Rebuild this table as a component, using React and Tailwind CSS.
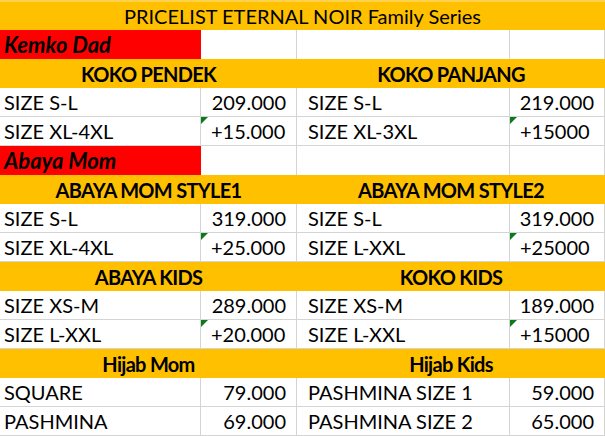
const font = { fontFamily: 'Lato, "Liberation Sans", sans-serif' };

const Flag = () => (
  <svg className="absolute left-0 top-0" width="7" height="7" viewBox="0 0 7 7">
    <polygon points="0,0 7,0 0,7" fill="#0b7a1f" />
  </svg>
);

const Label = ({ children, first }) => (
  <div className={`h-[29px] border-r border-b border-[#d4d4d4] bg-white flex items-center whitespace-nowrap ${first ? 'pl-[4px]' : 'pl-[11px]'}`}>
    {children}
  </div>
);

const Value = ({ children, flag }) => (
  <div className={`relative h-[29px] border-r border-b border-[#d4d4d4] bg-white flex items-center whitespace-nowrap ${flag ? 'justify-start pl-[10px]' : 'justify-end pr-[10px]'}`}>
    {flag && <Flag />}
    {children}
  </div>
);

const Header = ({ children }) => (
  <div className="col-span-2 h-[29px] bg-[#ffc000] flex items-center justify-center font-bold tracking-[-0.7px] whitespace-nowrap">
    {children}
  </div>
);

const Group = ({ name }) => (
  <>
    <div className="h-[29px] bg-[#ff0000] flex items-center pl-[4px] font-bold italic text-[22px]">{name}</div>
    <div className="h-[29px] border-r border-[#d4d4d4] bg-white" />
    <div className="h-[29px] border-r border-[#d4d4d4] bg-white" />
    <div className="h-[29px] border-r border-[#d4d4d4] bg-white" />
  </>
);

const sections = [
  {
    group: 'Kemko Dad',
    left: 'KOKO PENDEK',
    right: 'KOKO PANJANG',
    rows: [
      ['SIZE S-L', '209.000', false, 'SIZE S-L', '219.000', false],
      ['SIZE XL-4XL', '+15.000', true, 'SIZE XL-3XL', '+15000', true],
    ],
  },
  {
    group: 'Abaya Mom',
    left: 'ABAYA MOM STYLE1',
    right: 'ABAYA MOM STYLE2',
    rows: [
      ['SIZE S-L', '319.000', false, 'SIZE S-L', '319.000', false],
      ['SIZE XL-4XL', '+25.000', true, 'SIZE L-XXL', '+25000', true],
    ],
  },
  {
    left: 'ABAYA KIDS',
    right: 'KOKO KIDS',
    rows: [
      ['SIZE XS-M', '289.000', false, 'SIZE XS-M', '189.000', false],
      ['SIZE L-XXL', '+20.000', true, 'SIZE L-XXL', '+15000', true],
    ],
  },
  {
    left: 'Hijab Mom',
    right: 'Hijab Kids',
    rows: [
      ['SQUARE', '79.000', false, 'PASHMINA SIZE 1', '59.000', false],
      ['PASHMINA', '69.000', false, 'PASHMINA SIZE 2', '65.000', false],
    ],
  },
];

export default function App() {
  return (
    <div className="w-[605px] h-[436px] bg-white text-black text-[20px] overflow-hidden" style={font}>
      <div className="h-[30px] bg-[#ffc000] border-t-2 border-[#ffd24d] flex items-center justify-center whitespace-nowrap">
        PRICELIST ETERNAL NOIR Family Series
      </div>
      <div className="grid grid-cols-[201px_96px_213px_95px]">
        {sections.map((s, i) => (
          <div key={i} className="contents">
            {s.group && <Group name={s.group} />}
            <Header>{s.left}</Header>
            <Header>{s.right}</Header>
            {s.rows.map((r, j) => (
              <div key={j} className="contents">
                <Label first>{r[0]}</Label>
                <Value flag={r[2]}>{r[1]}</Value>
                <Label>{r[3]}</Label>
                <Value flag={r[5]}>{r[4]}</Value>
              </div>
            ))}
          </div>
        ))}
      </div>
    </div>
  );
}
